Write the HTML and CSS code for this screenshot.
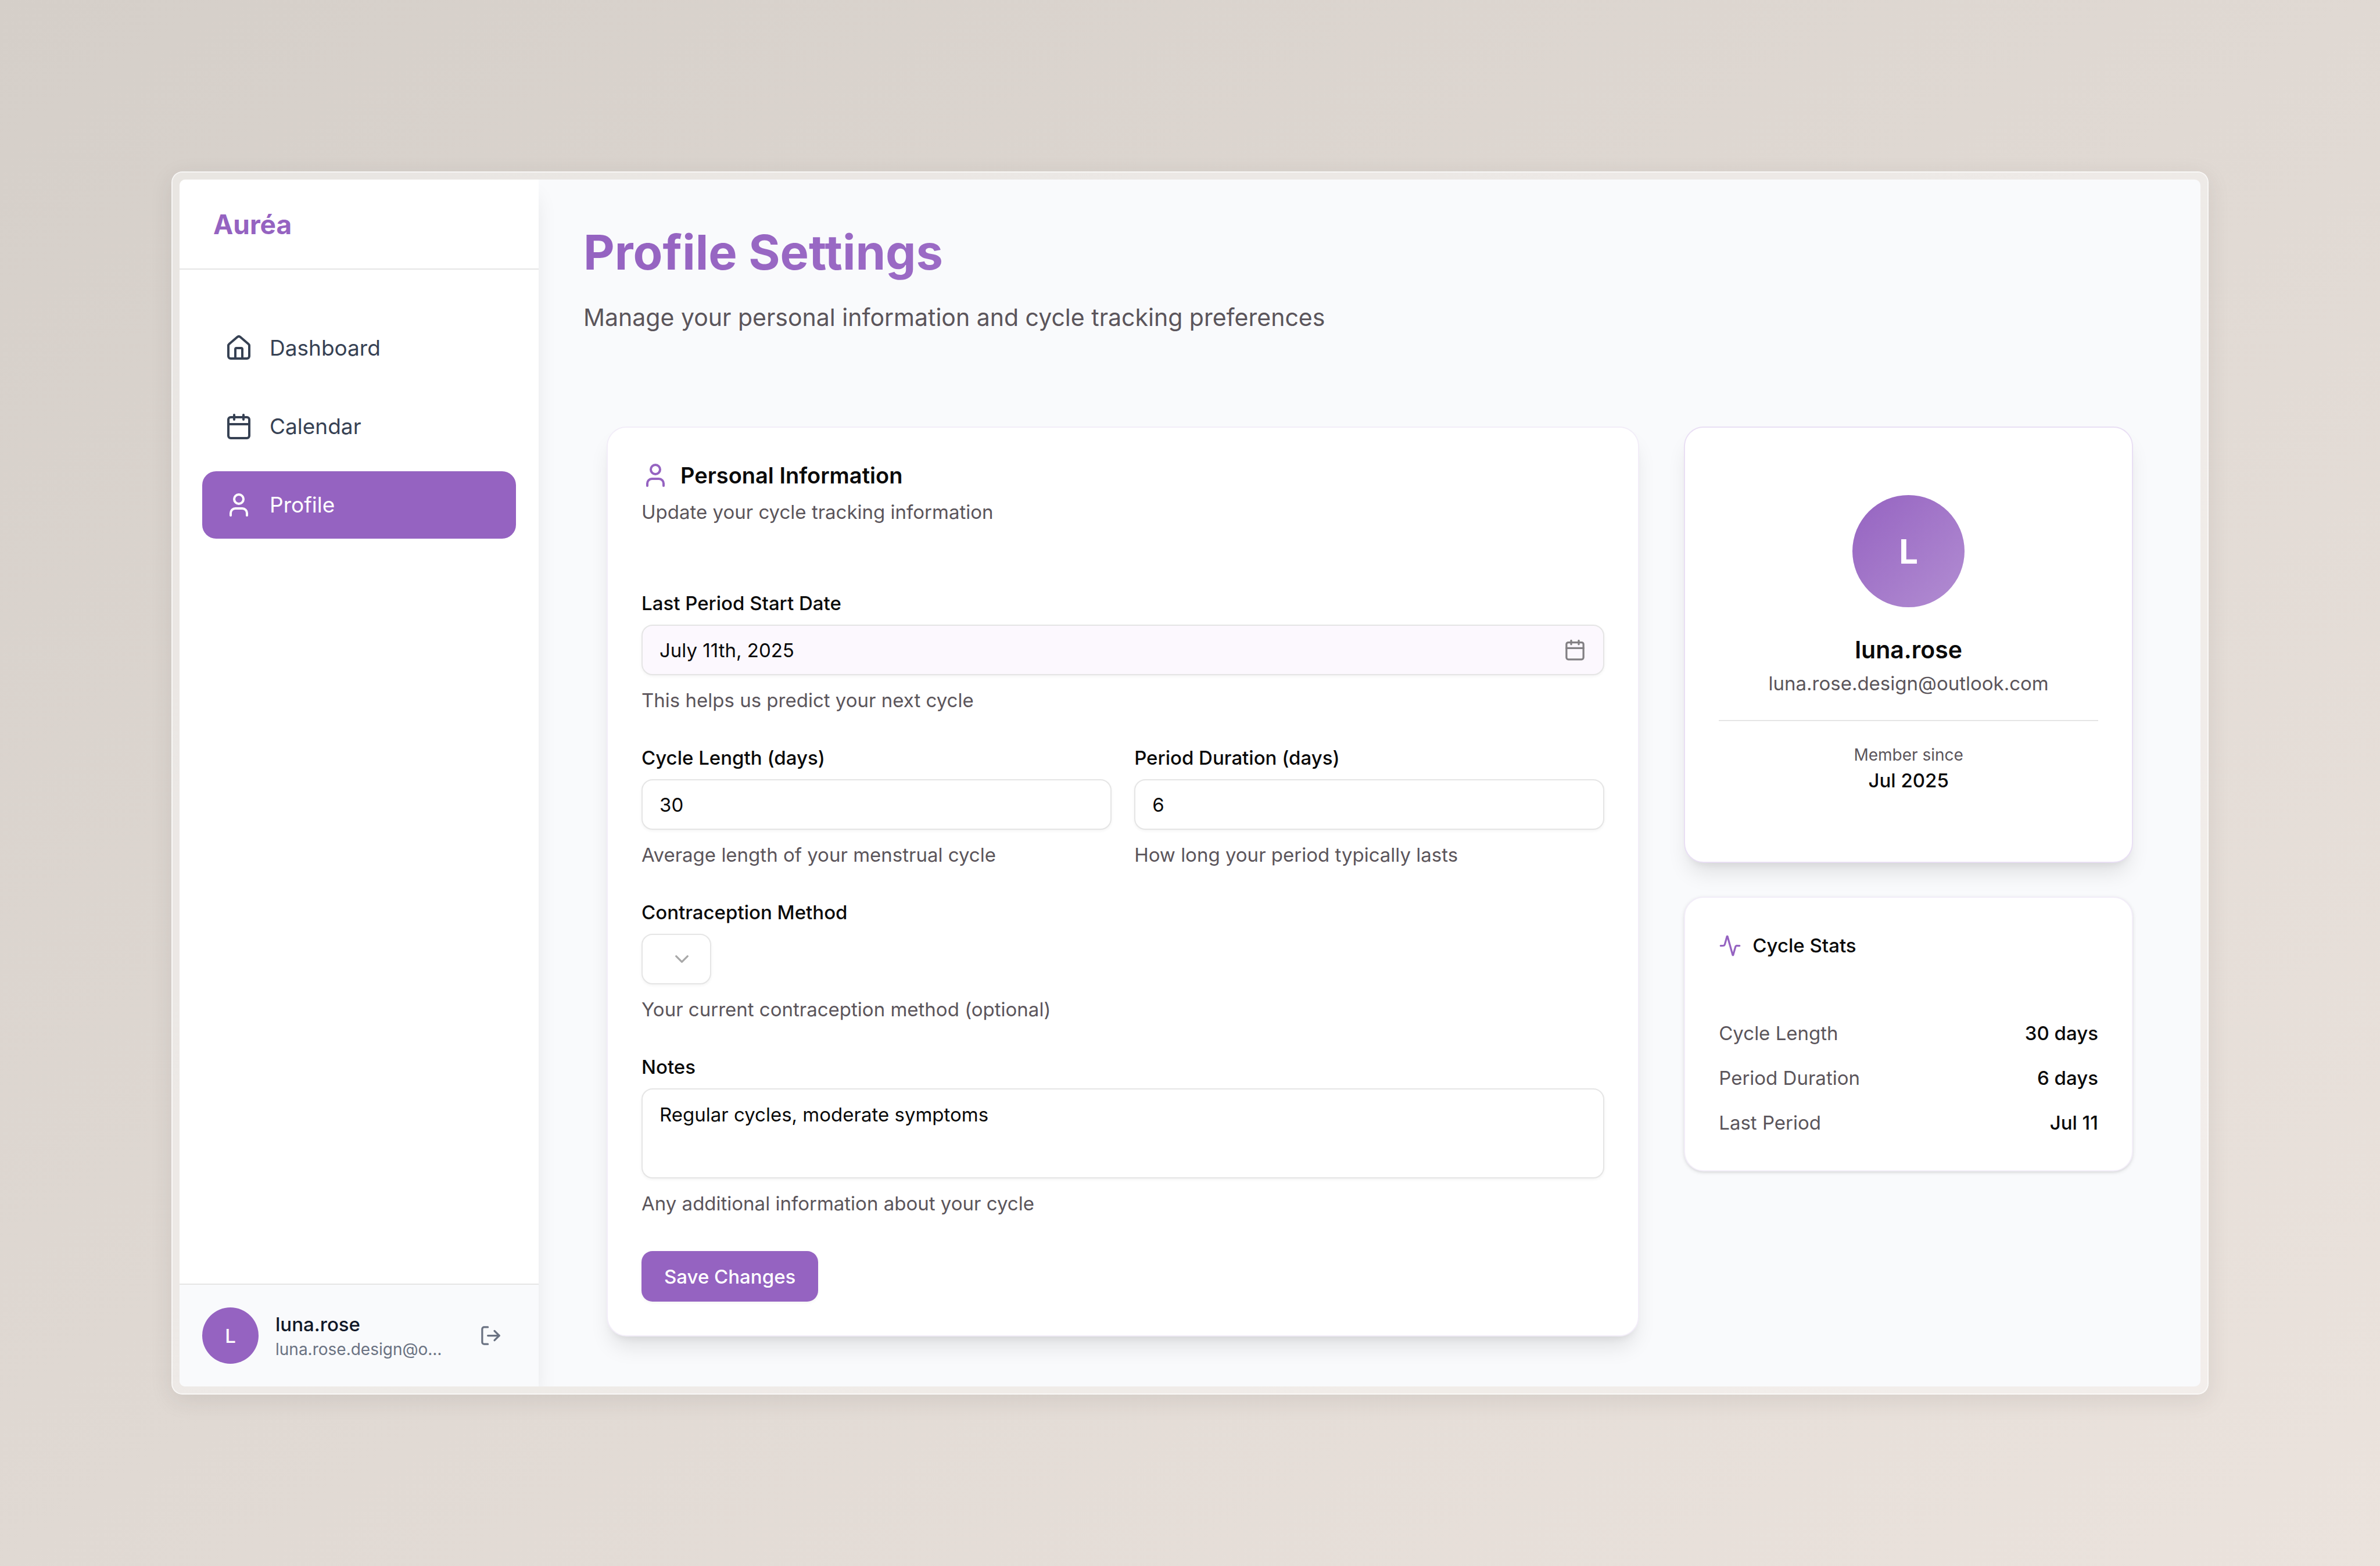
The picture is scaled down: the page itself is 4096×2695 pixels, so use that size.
FILE: index.html
```html
<!DOCTYPE html>
<html lang="en">
<head>
<meta charset="utf-8">
<meta name="viewport" content="width=device-width, initial-scale=1">
<title>Auréa – Profile Settings</title>
<link rel="stylesheet" href="styles.css">
</head>
<body>
<div class="frame">
  <div class="app">
    <aside class="sidebar">
      <div class="brand"><a class="brand-link" href="#">Auréa</a></div>
      <nav class="nav">
        <a class="nav-item" href="#dashboard">
          <svg class="icon icon-lg" viewBox="0 0 24 24" aria-hidden="true"><path d="M15 21v-8a1 1 0 0 0-1-1h-4a1 1 0 0 0-1 1v8"/><path d="M3 10a2 2 0 0 1 .709-1.528l7-5.999a2 2 0 0 1 2.582 0l7 5.999A2 2 0 0 1 21 10v9a2 2 0 0 1-2 2H5a2 2 0 0 1-2-2z"/></svg>
          <span>Dashboard</span>
        </a>
        <a class="nav-item" href="#calendar">
          <svg class="icon icon-lg" viewBox="0 0 24 24" aria-hidden="true"><path d="M8 2v4"/><path d="M16 2v4"/><rect width="18" height="18" x="3" y="4" rx="2"/><path d="M3 10h18"/></svg>
          <span>Calendar</span>
        </a>
        <a class="nav-item nav-item-active" href="#profile" aria-current="page">
          <svg class="icon icon-lg" viewBox="0 0 24 24" aria-hidden="true"><path d="M19 21v-2a4 4 0 0 0-4-4H9a4 4 0 0 0-4 4v2"/><circle cx="12" cy="7" r="4"/></svg>
          <span>Profile</span>
        </a>
      </nav>
      <div class="account">
        <div class="avatar avatar-sm">L</div>
        <div class="account-text">
          <div class="account-name">luna.rose</div>
          <div class="account-email">luna.rose.design@outlook.com</div>
        </div>
        <button class="logout" type="button" aria-label="Log out">
          <svg class="icon icon-sm" viewBox="0 0 24 24" aria-hidden="true"><path d="m16 17 5-5-5-5"/><path d="M21 12H9"/><path d="M9 21H5a2 2 0 0 1-2-2V5a2 2 0 0 1 2-2h4"/></svg>
        </button>
      </div>
    </aside>

    <main class="main">
      <header class="page-header">
        <h1 class="page-title">Profile Settings</h1>
        <p class="page-subtitle">Manage your personal information and cycle tracking preferences</p>
      </header>

      <div class="columns">
        <section class="card card-form">
          <div class="card-header">
            <h2 class="card-title">
              <svg class="icon icon-lg icon-accent" viewBox="0 0 24 24" aria-hidden="true"><path d="M19 21v-2a4 4 0 0 0-4-4H9a4 4 0 0 0-4 4v2"/><circle cx="12" cy="7" r="4"/></svg>
              Personal Information
            </h2>
            <p class="muted">Update your cycle tracking information</p>
          </div>

          <form class="form">
            <div class="field">
              <label class="label" for="last-period">Last Period Start Date</label>
              <button class="control date-button" id="last-period" type="button">
                <span>July 11th, 2025</span>
                <svg class="icon icon-sm icon-faded" viewBox="0 0 24 24" aria-hidden="true"><path d="M8 2v4"/><path d="M16 2v4"/><rect width="18" height="18" x="3" y="4" rx="2"/><path d="M3 10h18"/></svg>
              </button>
              <p class="muted">This helps us predict your next cycle</p>
            </div>

            <div class="field-row">
              <div class="field">
                <label class="label" for="cycle-length">Cycle Length (days)</label>
                <input class="control" id="cycle-length" type="text" inputmode="numeric" value="30">
                <p class="muted">Average length of your menstrual cycle</p>
              </div>
              <div class="field">
                <label class="label" for="period-duration">Period Duration (days)</label>
                <input class="control" id="period-duration" type="text" inputmode="numeric" value="6">
                <p class="muted">How long your period typically lasts</p>
              </div>
            </div>

            <div class="field">
              <label class="label" for="contraception">Contraception Method</label>
              <div class="select">
                <select class="control select-control" id="contraception"><option value=""></option></select>
                <svg class="icon icon-sm select-arrow" viewBox="0 0 24 24" aria-hidden="true"><path d="m6 9 6 6 6-6"/></svg>
              </div>
              <p class="muted">Your current contraception method (optional)</p>
            </div>

            <div class="field">
              <label class="label" for="notes">Notes</label>
              <textarea class="control textarea" id="notes">Regular cycles, moderate symptoms</textarea>
              <p class="muted">Any additional information about your cycle</p>
            </div>

            <button class="save" type="submit">Save Changes</button>
          </form>
        </section>

        <div class="side">
          <section class="card card-profile">
            <div class="avatar avatar-lg">L</div>
            <h2 class="profile-name">luna.rose</h2>
            <p class="muted">luna.rose.design@outlook.com</p>
            <div class="member">
              <p class="member-label">Member since</p>
              <p class="member-value">Jul 2025</p>
            </div>
          </section>

          <section class="card card-stats">
            <h2 class="stats-title">
              <svg class="icon icon-sm icon-accent" viewBox="0 0 24 24" aria-hidden="true"><path d="M22 12h-2.48a2 2 0 0 0-1.93 1.46l-2.35 8.36a.25.25 0 0 1-.48 0L9.24 2.18a.25.25 0 0 0-.48 0l-2.35 8.36A2 2 0 0 1 4.49 12H2"/></svg>
              Cycle Stats
            </h2>
            <dl class="stats">
              <div class="stat"><dt>Cycle Length</dt><dd>30 days</dd></div>
              <div class="stat"><dt>Period Duration</dt><dd>6 days</dd></div>
              <div class="stat"><dt>Last Period</dt><dd>Jul 11</dd></div>
            </dl>
          </section>
        </div>
      </div>
    </main>
  </div>
</div>
</body>
</html>
```

FILE: styles.css
```css
:root {
  --accent: #9563c1;
  --accent-soft: #b28dd2;
  --ink: #0a0a0a;
  --muted: #5b555b;
  --line: #e5e5e5;
  --surface: #f9fafc;
  --text-xs: 28px;
  --text-sm: 33px;
  --text-nav: 37px;
  --text-md: 38px;
  --text-lg: 41px;
}

*,
*::before,
*::after {
  box-sizing: border-box;
}

body {
  margin: 0;
  min-height: 100vh;
  display: flex;
  padding: 295px;
  background: linear-gradient(to bottom right, #d5cfc9, #ebe3dd);
  color: var(--ink);
  font-family: Inter, "Liberation Sans", sans-serif;
  font-size: var(--text-sm);
  line-height: 48px;
}

h1,
h2,
p,
dl,
dd {
  margin: 0;
}

button,
input,
select,
textarea {
  margin: 0;
  font: inherit;
  color: inherit;
}

.frame {
  flex: 1;
  display: flex;
  padding: 12px;
  border: 2px solid rgba(255, 255, 255, 0.8);
  border-radius: 19px;
  background: rgba(255, 255, 255, 0.45);
  background-clip: padding-box;
  box-shadow: 0 10px 38px rgba(60, 50, 50, 0.1);
}

.app {
  flex: 1;
  display: flex;
  overflow: hidden;
  border-radius: 10px;
  background: var(--surface);
}

.icon {
  flex: none;
  fill: none;
  stroke: currentColor;
  stroke-width: 2;
  stroke-linecap: round;
  stroke-linejoin: round;
}

.icon-lg {
  width: 48px;
  height: 48px;
}

.icon-sm {
  width: 39px;
  height: 39px;
}

.icon-accent {
  color: var(--accent);
}

.icon-faded {
  opacity: 0.5;
}

/* Sidebar */
.sidebar {
  flex: none;
  width: 618px;
  display: flex;
  flex-direction: column;
  background: #fff;
  box-shadow: 0 24px 36px -7px rgba(0, 0, 0, 0.1);
}

.brand {
  display: flex;
  align-items: center;
  height: 155px;
  padding: 0 58px;
  border-bottom: 2px solid var(--line);
}

.brand-link {
  color: var(--accent);
  font-size: 46px;
  font-weight: 700;
  text-decoration: none;
}

.nav {
  flex: 1;
  display: flex;
  flex-direction: column;
  gap: 19px;
  padding: 77px 39px;
}

.nav-item {
  display: flex;
  align-items: center;
  gap: 29px;
  height: 116px;
  padding: 0 39px;
  border-radius: 24px;
  color: #364153;
  font-size: var(--text-nav);
  text-decoration: none;
}

.nav-item-active {
  background: var(--accent);
  color: #fff;
}

.account {
  display: flex;
  align-items: center;
  padding: 39px;
  border-top: 2px solid var(--line);
  background: var(--surface);
}

.account-text {
  flex: 1;
  min-width: 0;
  padding: 0 29px;
}

.account-name {
  color: #101828;
  font-weight: 500;
}

.account-email {
  overflow: hidden;
  color: #6a7282;
  font-size: var(--text-xs);
  line-height: 39px;
  text-overflow: ellipsis;
  white-space: nowrap;
}

.logout {
  flex: none;
  display: flex;
  align-items: center;
  justify-content: center;
  width: 87px;
  height: 77px;
  padding: 0;
  border: 0;
  background: none;
  color: #6a7282;
}

.avatar {
  flex: none;
  display: flex;
  align-items: center;
  justify-content: center;
  border-radius: 50%;
  color: #fff;
}

.avatar-sm {
  width: 97px;
  height: 97px;
  background: var(--accent);
  font-weight: 500;
}

.avatar-lg {
  width: 193px;
  height: 193px;
  margin-bottom: 39px;
  background: linear-gradient(135deg, var(--accent), var(--accent-soft));
  font-size: 58px;
  font-weight: 700;
}

/* Page */
.main {
  flex: 1;
  min-width: 0;
  padding: 77px;
}

.page-title {
  margin-bottom: 29px;
  background: linear-gradient(90deg, var(--accent), #9f70c8 40%);
  background-clip: text;
  color: transparent;
  font-size: 83px;
  font-weight: 700;
  line-height: 97px;
}

.page-subtitle {
  color: var(--muted);
  font-size: var(--text-lg);
  line-height: 68px;
}

.columns {
  display: grid;
  grid-template-columns: 2.3fr 1fr;
  align-items: start;
  gap: 77px;
  padding: 154px 39px 0 40px;
}

.side {
  display: grid;
  gap: 58px;
}

.card {
  padding: 58px;
  border: 2px solid #f2edf8;
  border-radius: 34px;
  background: #fff;
}

.card-form {
  box-shadow: 0 24px 36px -7px rgba(0, 0, 0, 0.1), 0 10px 15px -10px rgba(0, 0, 0, 0.1);
}

.card-header {
  display: grid;
  gap: 15px;
  margin-bottom: 116px;
}

.card-title {
  display: flex;
  align-items: center;
  gap: 19px;
  font-size: var(--text-md);
  font-weight: 600;
  line-height: 48px;
}

.muted {
  color: var(--muted);
}

.form {
  display: grid;
  justify-items: start;
  gap: 58px;
}

.field {
  display: grid;
  gap: 19px;
  width: 100%;
}

.field-row {
  display: grid;
  grid-template-columns: 1fr 1fr;
  gap: 39px;
  width: 100%;
}

.label {
  font-weight: 500;
  line-height: 35px;
}

.control {
  width: 100%;
  height: 87px;
  padding: 0 29px;
  border: 2px solid var(--line);
  border-radius: 19px;
  background: #fff;
  box-shadow: 0 2px 5px rgba(0, 0, 0, 0.05);
}

.date-button {
  display: flex;
  align-items: center;
  justify-content: space-between;
  background: #fcf8fe;
  text-align: left;
}

.select {
  position: relative;
  width: 120px;
}

.select-control {
  display: block;
  appearance: none;
}

.select-arrow {
  position: absolute;
  top: 24px;
  right: 31px;
  opacity: 0.35;
  pointer-events: none;
}

.textarea {
  display: block;
  height: 155px;
  padding: 19px 29px;
  resize: none;
}

.save {
  height: 87px;
  padding: 0 39px;
  border: 0;
  border-radius: 19px;
  background: var(--accent);
  box-shadow: 0 2px 5px rgba(0, 0, 0, 0.05);
  color: #fff;
  font-weight: 500;
}

.card-profile {
  display: flex;
  flex-direction: column;
  align-items: center;
  padding: 116px 58px;
  border-color: #e9dff4;
  box-shadow: 0 24px 36px -7px rgba(0, 0, 0, 0.1), 0 10px 15px -10px rgba(0, 0, 0, 0.1);
  text-align: center;
}

.profile-name {
  font-size: var(--text-lg);
  font-weight: 600;
  line-height: 68px;
}

.member {
  align-self: stretch;
  margin-top: 39px;
  padding-top: 39px;
  border-top: 2px solid var(--line);
}

.member-label {
  color: var(--muted);
  font-size: var(--text-xs);
  line-height: 39px;
}

.member-value {
  font-weight: 500;
}

.card-stats {
  box-shadow: 0 2px 7px rgba(0, 0, 0, 0.1), 0 2px 5px -2px rgba(0, 0, 0, 0.1);
}

.stats-title {
  display: flex;
  align-items: center;
  gap: 19px;
  margin-bottom: 103px;
  font-size: var(--text-sm);
  font-weight: 500;
}

.stats {
  display: grid;
  gap: 29px;
}

.stat {
  display: flex;
  justify-content: space-between;
}

.stat dt {
  color: var(--muted);
}

.stat dd {
  font-weight: 500;
}
```
